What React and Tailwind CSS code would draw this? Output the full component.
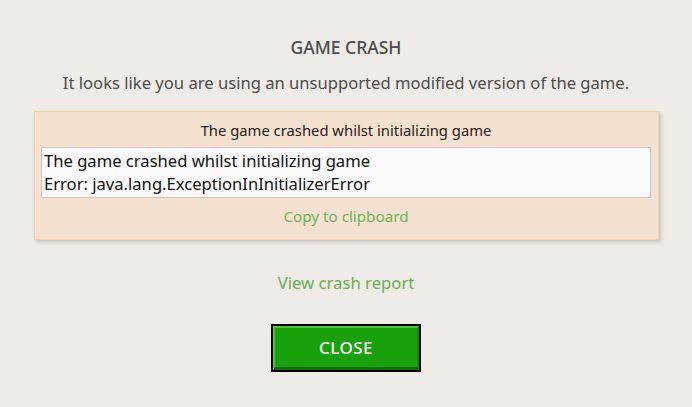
export default function App() {
  return (
    <div
      className="w-[692px] h-[407px] bg-[#efebe6] flex flex-col items-center"
      style={{ fontFamily: '"Noto Sans", "Open Sans", sans-serif' }}
    >
      <h1 className="mt-[36px] text-[17.5px] leading-[22px] font-medium text-[#4c4c4c]">
        GAME CRASH
      </h1>
      <p className="mt-[14px] text-[16.6px] leading-[22px] text-[#4c4c4c]">
        It looks like you are using an unsupported modified version of the game.
      </p>

      <div className="mt-[17px] w-[625px] h-[129px] bg-[#f5e1cf] border border-[#f4cfa3] shadow-[2px_2px_4px_rgba(0,0,0,0.18)] flex flex-col items-center">
        <div className="mt-[8px] text-[14.8px] leading-[20px] text-[#222]">
          The game crashed whilst initializing game
        </div>
        <div className="mt-[7px] w-[610px] h-[51px] bg-[#fafafa] border border-[#cdc6c0] px-[2px] py-[1px] text-[16.6px] leading-[23px] text-[#111]">
          <div>The game crashed whilst initializing game</div>
          <div>Error: java.lang.ExceptionInInitializerError</div>
        </div>
        <button className="mt-[8px] text-[15.2px] leading-[20px] text-[#6db557]">
          Copy to clipboard
        </button>
      </div>

      <button className="mt-[32px] text-[16.7px] leading-[22px] text-[#6aae53]">
        View crash report
      </button>

      <button className="mt-[30px] w-[150px] h-[48px] bg-black p-[2px]">
        <div className="w-full h-full bg-[#18a10b] border-t-2 border-l-2 border-[#4cc43c] border-b-[3px] border-b-[#0f6e07] border-r-[2px] border-r-[#138a09] flex items-center justify-center text-white text-[17px] font-medium tracking-[0.5px]">
          CLOSE
        </div>
      </button>
    </div>
  );
}
